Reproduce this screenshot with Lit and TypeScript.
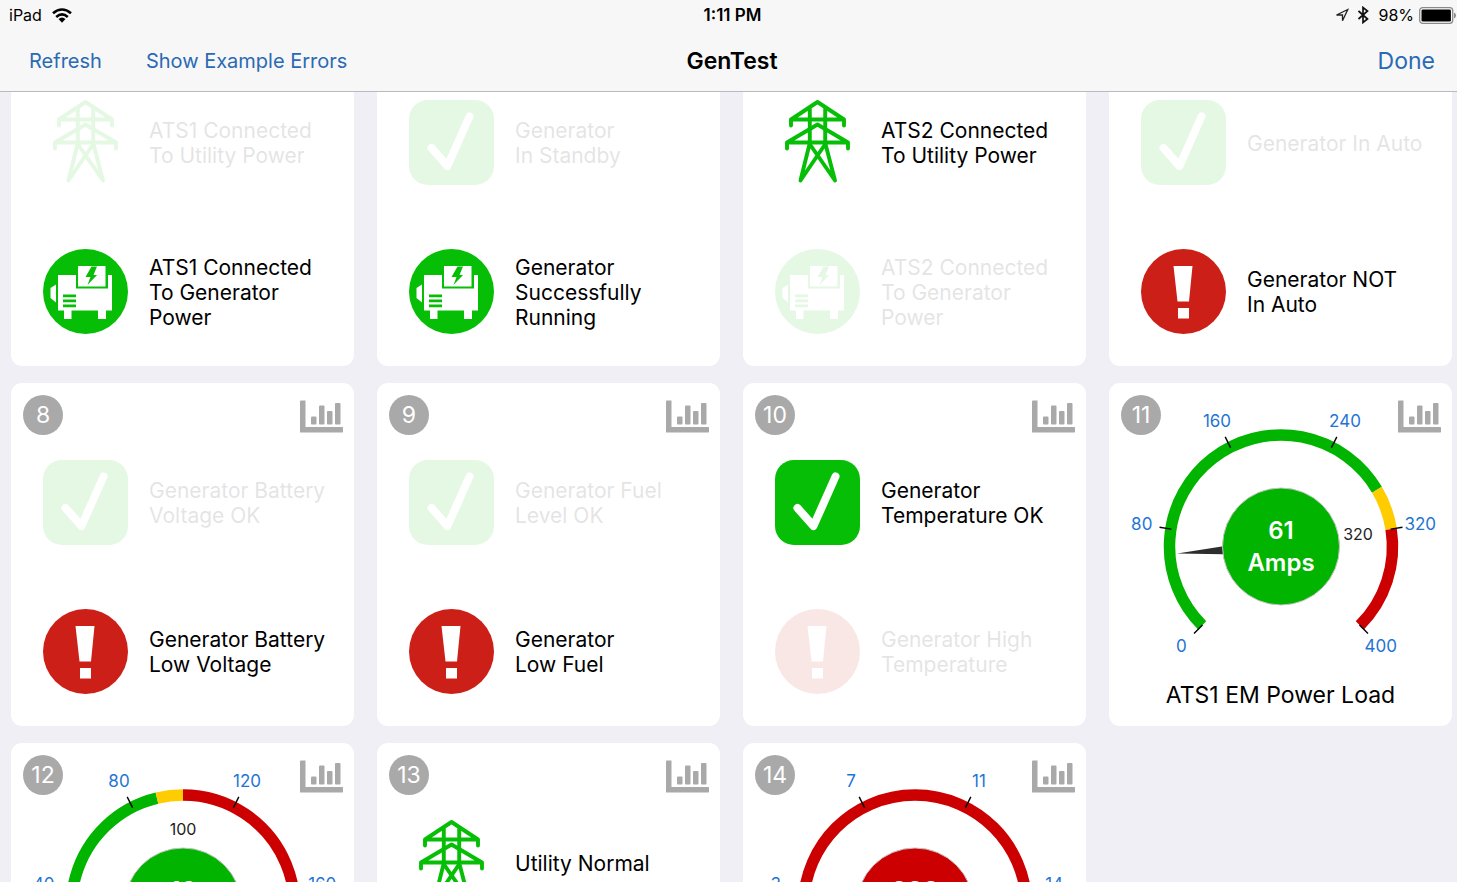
import { LitElement, html, svg, css, nothing } from "lit";
import { customElement, property } from "lit/decorators.js";

type IconName = "pylon" | "check" | "generator" | "alert";

interface Status {
  icon: IconName;
  lines: string[];
  active: boolean;
}

interface GaugeData {
  max: number;
  ticks: string[];
  bands: { from: number; to: number; color: string }[];
  limit?: number;
  value: number;
  reading: string;
  unit: string;
  color: string;
  title: string;
}

interface Tile {
  id: number;
  statuses?: Status[];
  gauge?: GaugeData;
}

const GREEN = "#00b400";
const YELLOW = "#ffcc00";
const RED = "#cc0000";

const on = (icon: IconName, ...lines: string[]): Status => ({ icon, lines, active: true });
const off = (icon: IconName, ...lines: string[]): Status => ({ icon, lines, active: false });

const TILES: Tile[] = [
  { id: 4, statuses: [off("pylon", "ATS1 Connected", "To Utility Power"), on("generator", "ATS1 Connected", "To Generator", "Power")] },
  { id: 5, statuses: [off("check", "Generator", "In Standby"), on("generator", "Generator", "Successfully", "Running")] },
  { id: 6, statuses: [on("pylon", "ATS2 Connected", "To Utility Power"), off("generator", "ATS2 Connected", "To Generator", "Power")] },
  { id: 7, statuses: [off("check", "Generator In Auto"), on("alert", "Generator NOT", "In Auto")] },
  { id: 8, statuses: [off("check", "Generator Battery", "Voltage OK"), on("alert", "Generator Battery", "Low Voltage")] },
  { id: 9, statuses: [off("check", "Generator Fuel", "Level OK"), on("alert", "Generator", "Low Fuel")] },
  { id: 10, statuses: [on("check", "Generator", "Temperature OK"), off("alert", "Generator High", "Temperature")] },
  {
    id: 11,
    gauge: {
      max: 400, ticks: ["0", "80", "160", "240", "320", "400"], limit: 320,
      bands: [{ from: 0, to: 288, color: GREEN }, { from: 288, to: 320, color: YELLOW }, { from: 320, to: 400, color: RED }],
      value: 61, reading: "61", unit: "Amps", color: GREEN, title: "ATS1 EM Power Load",
    },
  },
  {
    id: 12,
    gauge: {
      max: 200, ticks: ["0", "40", "80", "120", "160", "200"], limit: 100,
      bands: [{ from: 0, to: 90, color: GREEN }, { from: 90, to: 100, color: YELLOW }, { from: 100, to: 200, color: RED }],
      value: 16, reading: "16", unit: "Amps", color: GREEN, title: "ATS2 EM Power Load",
    },
  },
  { id: 13, statuses: [on("pylon", "Utility Normal"), off("alert", "Utility Failure")] },
  {
    id: 14,
    gauge: {
      max: 18, ticks: ["0", "3", "7", "11", "14", "18"],
      bands: [{ from: 0, to: 18, color: RED }],
      value: 0, reading: "000", unit: "Volts", color: RED, title: "Battery Voltage",
    },
  },
];

const ICONS = {
  pylon: svg`
    <g fill="none" stroke="#06be06" stroke-width="3.900" stroke-linecap="round" stroke-linejoin="round">
      <path d="M16 25.500V19.500L42.500 2L69 19.500V25.500M16 19.500H69M34.800 8V42.500M50.200 8V42.500" />
      <path d="M12 48.500V42.500L42.500 24.500L73 42.500V48.500M12 42.500H73" />
      <path d="M34.800 43L25.500 80.500L51 43M50.200 43L60 80.500L34 43" />
    </g>`,
  check: svg`
    <rect width="85" height="85" rx="19" fill="#06be06" />
    <path d="M22.500 48L38.500 66L60.500 16.500" fill="none" stroke="#fff" stroke-width="8" stroke-linecap="round" stroke-linejoin="round" />`,
  generator: svg`
    <circle cx="42.500" cy="42.500" r="42.500" fill="#06be06" />
    <path fill="#fff" d="M15 26H33V39.500H65V26H69V61.500H63V70H55V61.500H28.500V70H21V61.500H15ZM13 35.500V53.500L7.500 49V39ZM35 17H62.500V37.500H35Z" />
    <path fill="#06be06" d="M48.500 17.500H54L50.500 26H54L44.500 36L47.500 28H42.500ZM20 45.500H33V48.200H20ZM20 50.500H33V53.200H20ZM20 55.500H33V58.200H20Z" />`,
  alert: svg`
    <circle cx="42.500" cy="42.500" r="42.500" fill="#cc1f17" />
    <path fill="#fff" d="M32.500 17H51.500L48 52.500H36.500ZM37 59H48V69.500H37Z" />`,
};

@customElement("status-row")
class StatusRow extends LitElement {
  @property({ attribute: false }) status!: Status;

  static styles = css`
    :host { display: block; }
    .row { display: flex; align-items: center; gap: 21px; }
    .idle { opacity: 0.1; }
    .icon { flex: none; width: 85px; height: 85px; }
    .label { margin: 0; padding-top: 1px; font-size: 21px; line-height: 25px; color: #000; white-space: nowrap; }
    .line { display: block; }
  `;

  render() {
    const { icon, lines, active } = this.status;
    return html`
      <div class="row ${active ? "" : "idle"}">
        <svg class="icon" viewBox="0 0 85 85" aria-hidden="true">${ICONS[icon]}</svg>
        <p class="label">${lines.map((l) => html`<span class="line">${l}</span>`)}</p>
      </div>`;
  }
}

@customElement("dial-gauge")
class DialGauge extends LitElement {
  @property({ attribute: false }) data!: GaugeData;

  static styles = css`
    :host { display: block; }
    .dial { display: block; width: 100%; }
    .tick-label { font-size: 17px; fill: #1f74d6; }
    .limit { font-size: 16px; fill: #222; }
    .reading { font-size: 24px; font-weight: 600; fill: #fff; }
    .title { margin: 0; font-size: 23px; line-height: 30px; text-align: center; color: #000; }
  `;

  private point(value: number, radius: number) {
    const angle = ((-135 + (270 * value) / this.data.max) * Math.PI) / 180;
    return { x: 172 + radius * Math.sin(angle), y: 163.5 - radius * Math.cos(angle) };
  }

  private band(from: number, to: number, color: string) {
    const a = this.point(from, 111.5);
    const b = this.point(to, 111.5);
    const large = (270 * (to - from)) / this.data.max > 180 ? 1 : 0;
    return svg`<path d="M${a.x} ${a.y}A111.500 111.500 0 ${large} 1 ${b.x} ${b.y}" fill="none" stroke=${color} stroke-width="11.500" />`;
  }

  private tick(label: string, index: number, count: number) {
    const value = (this.data.max * index) / (count - 1);
    const a = this.point(value, 111);
    const b = this.point(value, 123);
    const t = this.point(value, 141);
    return svg`
      <line x1=${a.x} y1=${a.y} x2=${b.x} y2=${b.y} stroke="#000" stroke-width="1.400" />
      <text class="tick-label" x=${t.x} y=${t.y + 6} text-anchor="middle">${label}</text>`;
  }

  render() {
    const d = this.data;
    const turn = (270 * d.value) / d.max - 135;
    const limit = d.limit === undefined ? undefined : this.point(d.limit, 78);
    return html`
      <svg class="dial" viewBox="0 0 343 297" role="img" aria-label=${d.title}>
        ${d.bands.map((b) => this.band(b.from, b.to, b.color))}
        ${d.ticks.map((t, i) => this.tick(t, i, d.ticks.length))}
        <path d="M168 106L172 59.500L176 106Z" fill="#2d2d2d" transform="rotate(${turn} 172 163.5)" />
        <circle cx="172" cy="163.500" r="58.500" fill=${d.color} stroke="#c4c4c4" stroke-width="1" />
        ${limit ? svg`<text class="limit" x=${limit.x} y=${limit.y + 6} text-anchor="middle">${d.limit}</text>` : nothing}
        <text class="reading" x="172" y="156" text-anchor="middle">${d.reading}</text>
        <text class="reading" x="172" y="188" text-anchor="middle">${d.unit}</text>
      </svg>
      <p class="title">${d.title}</p>`;
  }
}

@customElement("monitor-tile")
class MonitorTile extends LitElement {
  @property({ attribute: false }) tile!: Tile;

  static styles = css`
    :host { display: block; }
    .card { display: grid; height: 343px; border-radius: 11px; background: #fff; }
    .head { grid-area: 1 / 1; z-index: 1; align-self: start; display: flex; justify-content: space-between; align-items: flex-start; padding: 12px 11px 12px 12px; }
    .badge { display: grid; place-items: center; width: 40px; height: 40px; border-radius: 50%; background: #a9a9a9; color: #fff; font-size: 23px; line-height: 40px; }
    .chart { display: block; padding: 5px 0 0; border: 0; background: none; cursor: pointer; }
    .chart-icon { display: block; width: 43px; height: 33px; }
    .statuses { grid-area: 1 / 1; display: flex; flex-direction: column; gap: 64px; padding: 77px 0 0 32px; }
    .gauge { grid-area: 1 / 1; min-width: 0; }
  `;

  render() {
    const { id, statuses, gauge } = this.tile;
    return html`
      <article class="card">
        <header class="head">
          <span class="badge">${id}</span>
          <button class="chart" type="button" aria-label="History">
            <svg class="chart-icon" viewBox="0 0 43 33" fill="#a9a9a9" aria-hidden="true">
              <path d="M1 0.500H5.500V27H42.500L43 27.500V32L42.500 32.500H0V1.500Q0 0.500 1 0.500Z" />
              <rect x="11" y="16.500" width="5.500" height="8" rx="1" />
              <rect x="19" y="5.500" width="5.500" height="19" rx="1" />
              <rect x="27" y="11" width="5.500" height="13.500" rx="1" />
              <rect x="35" y="3" width="5.500" height="21.500" rx="1" />
            </svg>
          </button>
        </header>
        ${statuses
          ? html`<div class="statuses">${statuses.map((s) => html`<status-row .status=${s}></status-row>`)}</div>`
          : nothing}
        ${gauge ? html`<dial-gauge class="gauge" .data=${gauge}></dial-gauge>` : nothing}
      </article>`;
  }
}

@customElement("app-root")
class AppRoot extends LitElement {
  static styles = css`
    :host { display: flex; flex-direction: column; height: 100vh; background: #efeff5; font-family: Inter, "Liberation Sans", sans-serif; color: #000; }
    .top { flex: none; background: #f7f7f7; border-bottom: 1px solid #b9b9c0; }
    .system { display: grid; grid-template-columns: 1fr auto 1fr; align-items: center; height: 30px; padding: 0 1px 0 9px; font-size: 16px; }
    .device { display: flex; align-items: center; gap: 10px; }
    .clock { font-size: 17px; font-weight: 600; }
    .power { display: flex; align-items: center; justify-content: flex-end; gap: 5px; }
    .wifi { width: 20px; height: 15px; }
    .arrow { width: 14px; height: 14px; }
    .bluetooth { width: 12px; height: 18px; margin-left: 3px; margin-right: 4px; }
    .battery { width: 37px; height: 17px; }
    .bar { display: grid; grid-template-columns: 1fr auto 1fr; align-items: center; height: 61px; padding: 0 22px 0 29px; }
    .actions { display: flex; gap: 44px; }
    .title { margin: 0; font-size: 23px; font-weight: 600; line-height: 28px; }
    .link { padding: 0; border: 0; background: none; font-family: inherit; font-size: 20px; line-height: 28px; color: #2a6ab4; cursor: pointer; white-space: nowrap; }
    .done { justify-self: end; font-size: 23px; }
    .scroller { flex: 1; min-height: 0; overflow-y: auto; scrollbar-width: none; }
    .tiles { display: grid; grid-template-columns: repeat(4, minmax(0, 1fr)); gap: 17px 23px; padding: 17px 5px 17px 11px; }
  `;

  firstUpdated() {
    const scroller = this.renderRoot.querySelector(".scroller") as HTMLElement;
    requestAnimationFrame(() => { scroller.scrollTop = 86; });
  }

  render() {
    return html`
      <header class="top">
        <div class="system">
          <span class="device">iPad
            <svg class="wifi" viewBox="0 0 20 15" aria-hidden="true">
              <g fill="none" stroke="#000" stroke-width="2.600">
                <path d="M1 5.300Q10 -2.300 19 5.300" />
                <path d="M4.200 8.900Q10 4 15.800 8.900" />
              </g>
              <path d="M6.500 11Q10 8 13.500 11L10 14.800Z" />
            </svg>
          </span>
          <span class="clock">1:11 PM</span>
          <span class="power">
            <svg class="arrow" viewBox="0 0 14 14" fill="none" stroke="#222" stroke-width="1.300" stroke-linejoin="miter" aria-hidden="true">
              <path d="M12.800 1.500L1.500 7H7.500V12.800Z" />
            </svg>
            <svg class="bluetooth" viewBox="0 0 12 18" fill="none" stroke="#111" stroke-width="1.700" aria-hidden="true">
              <path d="M1.500 5L10.500 13L6 16.500V1.500L10.500 5L1.500 13" />
            </svg>
            <span>98%</span>
            <svg class="battery" viewBox="0 0 37 17" aria-hidden="true">
              <rect x="0.700" y="0.700" width="33" height="15.600" rx="3" fill="#fff" stroke="#8a8a8a" stroke-width="1.300" />
              <rect x="2.500" y="2.500" width="29.400" height="12" rx="1.300" />
              <path d="M35 5.500Q37 6.500 37 8.500T35 11.500Z" fill="#8a8a8a" />
            </svg>
          </span>
        </div>
        <nav class="bar">
          <div class="actions">
            <button class="link" type="button">Refresh</button>
            <button class="link" type="button">Show Example Errors</button>
          </div>
          <h1 class="title">GenTest</h1>
          <button class="link done" type="button">Done</button>
        </nav>
      </header>
      <main class="scroller">
        <div class="tiles">${TILES.map((t) => html`<monitor-tile .tile=${t}></monitor-tile>`)}</div>
      </main>`;
  }
}
